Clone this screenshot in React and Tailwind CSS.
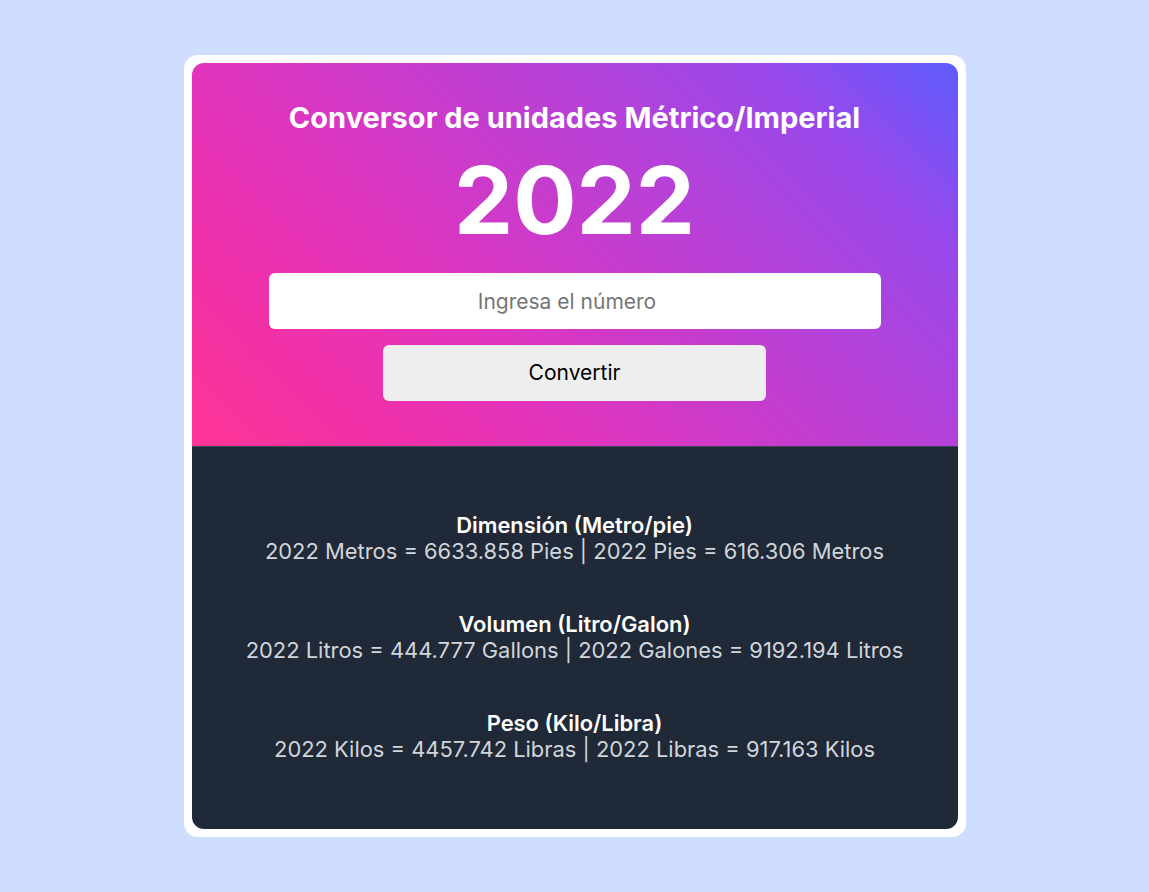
import React, { useState } from 'react';

const results = [
  {
    title: 'Dimensión (Metro/pie)',
    text: '2022 Metros = 6633.858 Pies | 2022 Pies = 616.306 Metros',
  },
  {
    title: 'Volumen (Litro/Galon)',
    text: '2022 Litros = 444.777 Gallons | 2022 Galones = 9192.194 Litros',
  },
  {
    title: 'Peso (Kilo/Libra)',
    text: '2022 Kilos = 4457.742 Libras | 2022 Libras = 917.163 Kilos',
  },
];

export default function App() {
  const [value, setValue] = useState('');

  return (
    <div className="min-h-screen bg-[#cfdefe] flex justify-center pt-[55px] font-['Inter',sans-serif]">
      <div className="w-[782px] h-[782px] bg-white rounded-[14px] p-[8px] flex flex-col">
        <div className="flex flex-col flex-1 rounded-[12px] overflow-hidden">
          {/* top: title + form */}
          <div className="h-[383px] bg-[linear-gradient(45deg,#ff3596_0%,#f030a8_17%,#e234bc_33%,#b242da_67%,#9848ea_83%,#5e5cff_100%)] flex flex-col items-center pt-[38px]">
            <h1 className="text-[29px] font-bold text-white leading-[34px]">
              Conversor de unidades Métrico/Imperial
            </h1>
            <div className="text-[94px] font-bold text-white leading-[106px] mt-[12px]">
              2022
            </div>
            <input
              type="number"
              value={value}
              onChange={(e) => setValue(e.target.value)}
              placeholder="Ingresa el número"
              className="mt-[20px] w-[612px] h-[56px] rounded-[6px] bg-white text-center text-[21px] text-gray-900 placeholder:text-[#757575] outline-none"
            />
            <button className="mt-[16px] w-[383px] h-[56px] rounded-[6px] bg-[#eeeeee] text-[21px] text-black">
              Convertir
            </button>
          </div>

          {/* bottom: results */}
          <div className="flex-1 bg-[#1f2937] flex flex-col items-center pt-[65px] gap-[47px] border-t border-gray-500/40">
            {results.map((r) => (
              <div key={r.title} className="text-center leading-[26px] text-[21.9px]">
                <div className="font-semibold text-white">{r.title}</div>
                <div className="text-gray-300">{r.text}</div>
              </div>
            ))}
          </div>
        </div>
      </div>
    </div>
  );
}
